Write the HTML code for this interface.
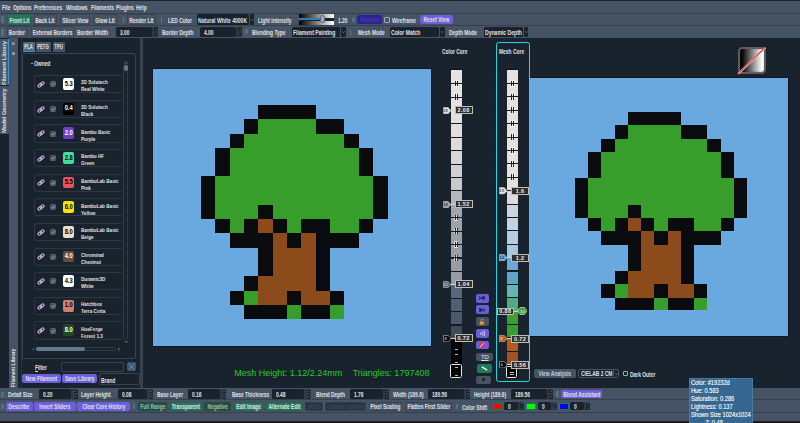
<!DOCTYPE html><html><head><meta charset='utf-8'><style>
*{box-sizing:border-box;margin:0;padding:0}
html,body{width:800px;height:423px;overflow:hidden;background:#19232D}
body{position:relative;font-family:"Liberation Sans",sans-serif;color:#E0E1E3}
.a{position:absolute}
.t{position:absolute;white-space:nowrap;line-height:1;transform-origin:0 0}
svg{display:block}
.bar{position:absolute;left:0;width:800px;background:#455364}
.btn{position:absolute;line-height:1;padding-top:3px;border:1px solid #3a4552;border-radius:1.5px;background:#455364;display:flex;align-items:center;justify-content:center;white-space:nowrap;font-size:6.6px;font-weight:bold;color:#E0E1E3}
.btn span{display:inline-block;transform:scaleX(.745)}
.grn{background:#1f7a5c;border-color:#2b5f50}
.dgrn{background:#1b5141;border-color:#254a3f;color:#a8b8b0}
.pur{background:#6b5fdc;border-color:#6b5fdc;border-radius:2px}
.spin{position:absolute;background:#19232D;border-radius:1.5px}
.grip{position:absolute;width:2.5px;background:#60798B;opacity:.7}
.sep{position:absolute;width:1px;background:#788D9C;opacity:.6}
</style></head><body><div class="a" style="left:0px;top:0px;width:800px;height:423px;background:#19232D;"></div>
<div class="a" style="left:0px;top:1px;width:800px;height:36.8px;background:#36404c;"></div>
<div class="bar" style="top:1px;height:11.8px"></div>
<div class="bar" style="top:13.8px;height:11.2px"></div>
<div class="bar" style="top:26px;height:11.8px"></div>
<div class="t" style="left:1.9px;top:4.90px;font-size:6.6px;font-weight:bold;letter-spacing:0px;transform:scaleX(0.745);">File</div>
<div class="t" style="left:12.75px;top:4.90px;font-size:6.6px;font-weight:bold;letter-spacing:0px;transform:scaleX(0.745);">Options</div>
<div class="t" style="left:34.3px;top:4.90px;font-size:6.6px;font-weight:bold;letter-spacing:0px;transform:scaleX(0.745);">Preferences</div>
<div class="t" style="left:66px;top:4.90px;font-size:6.6px;font-weight:bold;letter-spacing:0px;transform:scaleX(0.745);">Windows</div>
<div class="t" style="left:91px;top:4.90px;font-size:6.6px;font-weight:bold;letter-spacing:0px;transform:scaleX(0.745);">Filaments</div>
<div class="t" style="left:116.3px;top:4.90px;font-size:6.6px;font-weight:bold;letter-spacing:0px;transform:scaleX(0.745);">Plugins</div>
<div class="t" style="left:136.4px;top:4.90px;font-size:6.6px;font-weight:bold;letter-spacing:0px;transform:scaleX(0.745);">Help</div>
<div class="grip" style="left:1.2px;top:15.5px;height:7px"></div>
<div class="btn grn" style="left:6.7px;top:14.4px;width:24.80px;height:10.40px;padding-top:3.00px;"><span>Front Lit</span></div>
<div class="btn " style="left:33.5px;top:14.4px;width:23.40px;height:10.40px;padding-top:3.00px;"><span>Back Lit</span></div>
<div class="btn " style="left:59.75px;top:14.4px;width:30.50px;height:10.40px;padding-top:3.00px;"><span>Slicer View</span></div>
<div class="btn " style="left:92.75px;top:14.4px;width:25.00px;height:10.40px;padding-top:3.00px;"><span>Glow Lit</span></div>
<div class="sep" style="left:122.5px;top:16.5px;height:6px"></div>
<div class="btn " style="left:126.9px;top:14.4px;width:29.35px;height:10.40px;padding-top:3.00px;"><span>Render Lit</span></div>
<div class="sep" style="left:161.3px;top:16.5px;height:6px"></div>
<div class="t" style="left:167.75px;top:17.50px;font-size:6.6px;font-weight:bold;letter-spacing:0px;transform:scaleX(0.745);">LED Color</div>
<div class="a" style="left:196.9px;top:14.4px;width:52.099999999999994px;height:10.4px;background:#19232D;border-radius:1.5px;"></div>
<div class="t" style="left:197.70000000000002px;top:17.90px;font-size:6.6px;font-weight:bold;letter-spacing:0px;transform:scaleX(0.77);">Natural White 4000K</div>
<div class="a" style="left:250px;top:14.4px;width:4.400000000000006px;height:10.4px;background:#19232D;border-radius:1px;"></div>
<svg class="a" style="left:250.70px;top:18.60px" width="3" height="2"><path d="M0.3 0.4L1.5 1.6L2.7 0.4" stroke="#9DA9B5" stroke-width="0.6" fill="none"/></svg>
<div class="t" style="left:257.75px;top:17.50px;font-size:6.6px;font-weight:bold;letter-spacing:0px;transform:scaleX(0.745);">Light Intensity</div>
<div class="a" style="left:298.75px;top:13.75px;width:35.25px;height:11.25px;background:linear-gradient(90deg,#000,#fff)"></div>
<div class="a" style="left:298.75px;top:17.5px;width:35.25px;height:3.3px;background:#19232D;"></div>
<div class="a" style="left:299.3px;top:18.3px;width:22px;height:1.8px;background:#3d7ab5;"></div>
<div class="a" style="left:320px;top:14.9px;width:4.8px;height:8.6px;background:#9aa6b2;border:0.6px solid #5d6b7a;border-radius:2.2px;"></div>
<div class="t" style="left:337.5px;top:17.50px;font-size:6.6px;font-weight:bold;letter-spacing:0px;transform:scaleX(0.745);">1.20</div>
<div class="grip" style="left:352px;top:16.9px;height:5.6px"></div>
<div class="btn " style="left:357.25px;top:15.25px;width:25.00px;height:8.50px;padding-top:1.29px;background:#2c219c;border-color:#2c219c;border-radius:2px;color:#4a3d8c"><span>Remesh</span></div>
<div class="a" style="left:384px;top:17.25px;width:6px;height:5.65px;background:#455364;border:0.8px solid #9DA9B5;border-radius:1px;"></div>
<div class="t" style="left:391.5px;top:17.50px;font-size:6.6px;font-weight:bold;letter-spacing:0px;transform:scaleX(0.745);">Wireframe</div>
<div class="btn pur" style="left:420.2px;top:15.25px;width:32.80px;height:8.55px;padding-top:1.34px;"><span>Reset View</span></div>
<div class="grip" style="left:1.2px;top:28.5px;height:7px"></div>
<div class="btn " style="left:6.5px;top:26.25px;width:21.25px;height:11.25px;padding-top:3.76px;"><span>Border</span></div>
<div class="btn " style="left:30.6px;top:26.25px;width:43.80px;height:11.25px;padding-top:3.76px;"><span>External Borders</span></div>
<div class="t" style="left:76.9px;top:30.10px;font-size:6.6px;font-weight:bold;letter-spacing:0px;transform:scaleX(0.745);">Border Width</div>
<div class="spin" style="left:116px;top:26.9px;width:35.70px;height:10.0px"></div>
<div class="a" style="left:151.7px;top:26.9px;width:6.4px;height:10.0px;background:#2e3945;border-radius:0 1.5px 1.5px 0;"></div>
<div class="t" style="left:120px;top:29.60px;font-size:6.6px;font-weight:bold;letter-spacing:0px;transform:scaleX(0.745);">3.00</div>
<div class="a" style="left:154.1px;top:27.4px;width:3.8px;height:3.7px;background:#19232D;"></div>
<div class="a" style="left:154.1px;top:32.699999999999996px;width:3.8px;height:3.7px;background:#19232D;"></div>
<svg class="a" style="left:154.80px;top:28.50px" width="2.4" height="1.6"><path d="M0.2 1.3L1.2 0.3L2.2 1.3" stroke="#9DA9B5" stroke-width="0.55" fill="none"/></svg>
<svg class="a" style="left:154.80px;top:33.90px" width="2.4" height="1.6"><path d="M0.2 0.3L1.2 1.3L2.2 0.3" stroke="#9DA9B5" stroke-width="0.55" fill="none"/></svg>
<div class="t" style="left:161.9px;top:30.10px;font-size:6.6px;font-weight:bold;letter-spacing:0px;transform:scaleX(0.745);">Border Depth</div>
<div class="spin" style="left:199.75px;top:26.9px;width:35.75px;height:10.0px"></div>
<div class="a" style="left:235.5px;top:26.9px;width:6.4px;height:10.0px;background:#2e3945;border-radius:0 1.5px 1.5px 0;"></div>
<div class="t" style="left:203.75px;top:29.60px;font-size:6.6px;font-weight:bold;letter-spacing:0px;transform:scaleX(0.745);">4.00</div>
<div class="a" style="left:237.9px;top:27.4px;width:3.8px;height:3.7px;background:#19232D;"></div>
<div class="a" style="left:237.9px;top:32.699999999999996px;width:3.8px;height:3.7px;background:#19232D;"></div>
<svg class="a" style="left:238.60px;top:28.50px" width="2.4" height="1.6"><path d="M0.2 1.3L1.2 0.3L2.2 1.3" stroke="#9DA9B5" stroke-width="0.55" fill="none"/></svg>
<svg class="a" style="left:238.60px;top:33.90px" width="2.4" height="1.6"><path d="M0.2 0.3L1.2 1.3L2.2 0.3" stroke="#9DA9B5" stroke-width="0.55" fill="none"/></svg>
<div class="grip" style="left:245px;top:29.4px;height:5px"></div>
<div class="t" style="left:251.9px;top:30.10px;font-size:6.6px;font-weight:bold;letter-spacing:0px;transform:scaleX(0.745);">Blending Type</div>
<div class="a" style="left:292.25px;top:26.8px;width:47.5px;height:10.2px;background:#19232D;border-radius:1.5px;"></div>
<div class="t" style="left:293.05px;top:30.20px;font-size:6.6px;font-weight:bold;letter-spacing:0px;transform:scaleX(0.77);">Filament Painting</div>
<div class="a" style="left:340.75px;top:26.8px;width:4.850000000000023px;height:10.2px;background:#19232D;border-radius:1px;"></div>
<svg class="a" style="left:341.68px;top:30.90px" width="3" height="2"><path d="M0.3 0.4L1.5 1.6L2.7 0.4" stroke="#9DA9B5" stroke-width="0.6" fill="none"/></svg>
<div class="sep" style="left:350.25px;top:29.5px;height:5.5px"></div>
<div class="t" style="left:358px;top:30.10px;font-size:6.6px;font-weight:bold;letter-spacing:0px;transform:scaleX(0.745);">Mesh Mode</div>
<div class="a" style="left:390px;top:26.8px;width:49.19999999999999px;height:10.2px;background:#19232D;border-radius:1.5px;"></div>
<div class="t" style="left:390.8px;top:30.20px;font-size:6.6px;font-weight:bold;letter-spacing:0px;transform:scaleX(0.77);">Color Match</div>
<div class="a" style="left:440.2px;top:26.8px;width:4.600000000000023px;height:10.2px;background:#19232D;border-radius:1px;"></div>
<svg class="a" style="left:441.00px;top:30.90px" width="3" height="2"><path d="M0.3 0.4L1.5 1.6L2.7 0.4" stroke="#9DA9B5" stroke-width="0.6" fill="none"/></svg>
<div class="t" style="left:448.7px;top:30.10px;font-size:6.6px;font-weight:bold;letter-spacing:0px;transform:scaleX(0.745);">Depth Mode</div>
<div class="a" style="left:484.2px;top:26.8px;width:38.55000000000001px;height:10.2px;background:#19232D;border-radius:1.5px;"></div>
<div class="t" style="left:485.0px;top:30.20px;font-size:6.6px;font-weight:bold;letter-spacing:0px;transform:scaleX(0.77);">Dynamic Depth</div>
<div class="a" style="left:523.75px;top:26.8px;width:4.649999999999977px;height:10.2px;background:#19232D;border-radius:1px;"></div>
<svg class="a" style="left:524.58px;top:30.90px" width="3" height="2"><path d="M0.3 0.4L1.5 1.6L2.7 0.4" stroke="#9DA9B5" stroke-width="0.6" fill="none"/></svg>
<div class="a" style="left:0px;top:388px;width:800px;height:33.2px;background:#36404c;"></div>
<div class="bar" style="top:388px;height:11.2px"></div>
<div class="bar" style="top:400.2px;height:12px"></div>
<div class="bar" style="top:413px;height:8.2px"></div>
<div class="a" style="left:0px;top:421.2px;width:800px;height:1.8px;background:#1f1b17;"></div>
<div class="grip" style="left:1.2px;top:392px;height:5px"></div>
<div class="t" style="left:8.1px;top:392.10px;font-size:6.6px;font-weight:bold;letter-spacing:0px;transform:scaleX(0.745);">Detail Size</div>
<div class="spin" style="left:38.75px;top:389.4px;width:32.60px;height:9.600000000000023px"></div>
<div class="a" style="left:71.35px;top:389.4px;width:6.4px;height:9.600000000000023px;background:#2e3945;border-radius:0 1.5px 1.5px 0;"></div>
<div class="t" style="left:42.75px;top:391.90px;font-size:6.6px;font-weight:bold;letter-spacing:0px;transform:scaleX(0.745);">0.20</div>
<div class="a" style="left:73.75px;top:389.9px;width:3.8px;height:3.5000000000000115px;background:#19232D;"></div>
<div class="a" style="left:73.75px;top:395.0px;width:3.8px;height:3.5000000000000115px;background:#19232D;"></div>
<svg class="a" style="left:74.45px;top:390.90px" width="2.4" height="1.6"><path d="M0.2 1.3L1.2 0.3L2.2 1.3" stroke="#9DA9B5" stroke-width="0.55" fill="none"/></svg>
<svg class="a" style="left:74.45px;top:396.10px" width="2.4" height="1.6"><path d="M0.2 0.3L1.2 1.3L2.2 0.3" stroke="#9DA9B5" stroke-width="0.55" fill="none"/></svg>
<div class="t" style="left:81px;top:392.10px;font-size:6.6px;font-weight:bold;letter-spacing:0px;transform:scaleX(0.745);">Layer Height</div>
<div class="spin" style="left:117.5px;top:389.4px;width:29.60px;height:9.600000000000023px"></div>
<div class="a" style="left:147.1px;top:389.4px;width:6.4px;height:9.600000000000023px;background:#2e3945;border-radius:0 1.5px 1.5px 0;"></div>
<div class="t" style="left:121.5px;top:391.90px;font-size:6.6px;font-weight:bold;letter-spacing:0px;transform:scaleX(0.745);">0.08</div>
<div class="a" style="left:149.5px;top:389.9px;width:3.8px;height:3.5000000000000115px;background:#19232D;"></div>
<div class="a" style="left:149.5px;top:395.0px;width:3.8px;height:3.5000000000000115px;background:#19232D;"></div>
<svg class="a" style="left:150.20px;top:390.90px" width="2.4" height="1.6"><path d="M0.2 1.3L1.2 0.3L2.2 1.3" stroke="#9DA9B5" stroke-width="0.55" fill="none"/></svg>
<svg class="a" style="left:150.20px;top:396.10px" width="2.4" height="1.6"><path d="M0.2 0.3L1.2 1.3L2.2 0.3" stroke="#9DA9B5" stroke-width="0.55" fill="none"/></svg>
<div class="t" style="left:156.9px;top:392.10px;font-size:6.6px;font-weight:bold;letter-spacing:0px;transform:scaleX(0.745);">Base Layer</div>
<div class="spin" style="left:187.5px;top:389.4px;width:32.60px;height:9.600000000000023px"></div>
<div class="a" style="left:220.1px;top:389.4px;width:6.4px;height:9.600000000000023px;background:#2e3945;border-radius:0 1.5px 1.5px 0;"></div>
<div class="t" style="left:191.5px;top:391.90px;font-size:6.6px;font-weight:bold;letter-spacing:0px;transform:scaleX(0.745);">0.16</div>
<div class="a" style="left:222.5px;top:389.9px;width:3.8px;height:3.5000000000000115px;background:#19232D;"></div>
<div class="a" style="left:222.5px;top:395.0px;width:3.8px;height:3.5000000000000115px;background:#19232D;"></div>
<svg class="a" style="left:223.20px;top:390.90px" width="2.4" height="1.6"><path d="M0.2 1.3L1.2 0.3L2.2 1.3" stroke="#9DA9B5" stroke-width="0.55" fill="none"/></svg>
<svg class="a" style="left:223.20px;top:396.10px" width="2.4" height="1.6"><path d="M0.2 0.3L1.2 1.3L2.2 0.3" stroke="#9DA9B5" stroke-width="0.55" fill="none"/></svg>
<div class="t" style="left:231.9px;top:392.10px;font-size:6.6px;font-weight:bold;letter-spacing:0px;transform:scaleX(0.745);">Base Thickness</div>
<div class="spin" style="left:272.25px;top:389.4px;width:31.95px;height:9.600000000000023px"></div>
<div class="a" style="left:304.20000000000005px;top:389.4px;width:6.4px;height:9.600000000000023px;background:#2e3945;border-radius:0 1.5px 1.5px 0;"></div>
<div class="t" style="left:276.25px;top:391.90px;font-size:6.6px;font-weight:bold;letter-spacing:0px;transform:scaleX(0.745);">0.48</div>
<div class="a" style="left:306.6px;top:389.9px;width:3.8px;height:3.5000000000000115px;background:#19232D;"></div>
<div class="a" style="left:306.6px;top:395.0px;width:3.8px;height:3.5000000000000115px;background:#19232D;"></div>
<svg class="a" style="left:307.30px;top:390.90px" width="2.4" height="1.6"><path d="M0.2 1.3L1.2 0.3L2.2 1.3" stroke="#9DA9B5" stroke-width="0.55" fill="none"/></svg>
<svg class="a" style="left:307.30px;top:396.10px" width="2.4" height="1.6"><path d="M0.2 0.3L1.2 1.3L2.2 0.3" stroke="#9DA9B5" stroke-width="0.55" fill="none"/></svg>
<div class="t" style="left:316px;top:392.10px;font-size:6.6px;font-weight:bold;letter-spacing:0px;transform:scaleX(0.745);">Blend Depth</div>
<div class="spin" style="left:350.25px;top:389.4px;width:32.35px;height:9.600000000000023px"></div>
<div class="a" style="left:382.6px;top:389.4px;width:6.4px;height:9.600000000000023px;background:#2e3945;border-radius:0 1.5px 1.5px 0;"></div>
<div class="t" style="left:354.25px;top:391.90px;font-size:6.6px;font-weight:bold;letter-spacing:0px;transform:scaleX(0.745);">1.76</div>
<div class="a" style="left:385.0px;top:389.9px;width:3.8px;height:3.5000000000000115px;background:#19232D;"></div>
<div class="a" style="left:385.0px;top:395.0px;width:3.8px;height:3.5000000000000115px;background:#19232D;"></div>
<svg class="a" style="left:385.70px;top:390.90px" width="2.4" height="1.6"><path d="M0.2 1.3L1.2 0.3L2.2 1.3" stroke="#9DA9B5" stroke-width="0.55" fill="none"/></svg>
<svg class="a" style="left:385.70px;top:396.10px" width="2.4" height="1.6"><path d="M0.2 0.3L1.2 1.3L2.2 0.3" stroke="#9DA9B5" stroke-width="0.55" fill="none"/></svg>
<div class="t" style="left:392.5px;top:392.10px;font-size:6.6px;font-weight:bold;letter-spacing:0px;transform:scaleX(0.745);">Width (189.6)</div>
<div class="spin" style="left:428.1px;top:389.4px;width:35.50px;height:9.600000000000023px"></div>
<div class="a" style="left:463.6px;top:389.4px;width:6.4px;height:9.600000000000023px;background:#2e3945;border-radius:0 1.5px 1.5px 0;"></div>
<div class="t" style="left:432.1px;top:391.90px;font-size:6.6px;font-weight:bold;letter-spacing:0px;transform:scaleX(0.745);">189.56</div>
<div class="a" style="left:466.0px;top:389.9px;width:3.8px;height:3.5000000000000115px;background:#19232D;"></div>
<div class="a" style="left:466.0px;top:395.0px;width:3.8px;height:3.5000000000000115px;background:#19232D;"></div>
<svg class="a" style="left:466.70px;top:390.90px" width="2.4" height="1.6"><path d="M0.2 1.3L1.2 0.3L2.2 1.3" stroke="#9DA9B5" stroke-width="0.55" fill="none"/></svg>
<svg class="a" style="left:466.70px;top:396.10px" width="2.4" height="1.6"><path d="M0.2 0.3L1.2 1.3L2.2 0.3" stroke="#9DA9B5" stroke-width="0.55" fill="none"/></svg>
<div class="t" style="left:473.75px;top:392.10px;font-size:6.6px;font-weight:bold;letter-spacing:0px;transform:scaleX(0.745);">Height (189.6)</div>
<div class="spin" style="left:511px;top:389.4px;width:35.70px;height:9.600000000000023px"></div>
<div class="a" style="left:546.7px;top:389.4px;width:6.4px;height:9.600000000000023px;background:#2e3945;border-radius:0 1.5px 1.5px 0;"></div>
<div class="t" style="left:515px;top:391.90px;font-size:6.6px;font-weight:bold;letter-spacing:0px;transform:scaleX(0.745);">189.56</div>
<div class="a" style="left:549.1px;top:389.9px;width:3.8px;height:3.5000000000000115px;background:#19232D;"></div>
<div class="a" style="left:549.1px;top:395.0px;width:3.8px;height:3.5000000000000115px;background:#19232D;"></div>
<svg class="a" style="left:549.80px;top:390.90px" width="2.4" height="1.6"><path d="M0.2 1.3L1.2 0.3L2.2 1.3" stroke="#9DA9B5" stroke-width="0.55" fill="none"/></svg>
<svg class="a" style="left:549.80px;top:396.10px" width="2.4" height="1.6"><path d="M0.2 0.3L1.2 1.3L2.2 0.3" stroke="#9DA9B5" stroke-width="0.55" fill="none"/></svg>
<div class="grip" style="left:556px;top:391px;height:6px"></div>
<div class="btn pur" style="left:560.9px;top:390.3px;width:41.60px;height:8.20px;padding-top:1.02px;"><span>Blend Assistant</span></div>
<div class="grip" style="left:1.2px;top:404px;height:5px"></div>
<div class="btn pur" style="left:6px;top:402.25px;width:26.75px;height:8.75px;padding-top:1.51px;"><span>Describe</span></div>
<div class="btn pur" style="left:34.4px;top:402.25px;width:41.20px;height:8.75px;padding-top:1.51px;"><span>Invert Sliders</span></div>
<div class="btn pur" style="left:77.25px;top:402.25px;width:52.50px;height:8.75px;padding-top:1.51px;"><span>Clear Core History</span></div>
<div class="grip" style="left:132.75px;top:404px;height:5px"></div>
<div class="btn dgrn" style="left:138.1px;top:401.8px;width:28.80px;height:9.40px;padding-top:2.10px;"><span>Full Range</span></div>
<div class="btn grn" style="left:169.75px;top:401.8px;width:32.15px;height:9.40px;padding-top:2.10px;"><span>Transparent</span></div>
<div class="btn dgrn" style="left:204.4px;top:401.8px;width:26.60px;height:9.40px;padding-top:2.10px;"><span>Negative</span></div>
<div class="btn grn" style="left:233.5px;top:401.8px;width:29.60px;height:9.40px;padding-top:2.10px;"><span>Edit Image</span></div>
<div class="btn grn" style="left:265.6px;top:401.8px;width:37.15px;height:9.40px;padding-top:2.10px;"><span>Alternate Edit</span></div>
<div class="btn " style="left:305px;top:401.8px;width:18.10px;height:9.40px;padding-top:2.10px;background:#26333f;color:#3a4754;border-color:#34404c"><span>sRGB</span></div>
<div class="btn " style="left:325.25px;top:401.8px;width:40.75px;height:9.40px;padding-top:2.10px;background:#26333f;color:#3a4754;border-color:#34404c"><span>Unbias Lighting</span></div>
<div class="btn " style="left:368.5px;top:401.8px;width:33.75px;height:9.40px;padding-top:2.10px;"><span>Pixel Scaling</span></div>
<div class="btn " style="left:404.75px;top:401.8px;width:47.50px;height:9.40px;padding-top:2.10px;"><span>Flatten First Slider</span></div>
<div class="grip" style="left:455.6px;top:404px;height:5px"></div>
<div class="t" style="left:461.9px;top:404.50px;font-size:6.6px;font-weight:bold;letter-spacing:0px;transform:scaleX(0.745);">Color Shift</div>
<div class="a" style="left:493.1px;top:402.5px;width:9.649999999999977px;height:7.5px;background:#ff0000;border:1.2px solid #1f7a5c;"></div>
<div class="spin" style="left:504.4px;top:402.3px;width:13.60px;height:8.199999999999989px"></div>
<div class="a" style="left:518.0px;top:402.3px;width:6.4px;height:8.199999999999989px;background:#2e3945;border-radius:0 1.5px 1.5px 0;"></div>
<div class="t" style="left:508.4px;top:404.10px;font-size:6.6px;font-weight:bold;letter-spacing:0px;transform:scaleX(0.745);">0</div>
<div class="a" style="left:520.4px;top:402.8px;width:3.8px;height:2.7999999999999945px;background:#19232D;"></div>
<div class="a" style="left:520.4px;top:407.2px;width:3.8px;height:2.7999999999999945px;background:#19232D;"></div>
<svg class="a" style="left:521.10px;top:403.45px" width="2.4" height="1.6"><path d="M0.2 1.3L1.2 0.3L2.2 1.3" stroke="#9DA9B5" stroke-width="0.55" fill="none"/></svg>
<svg class="a" style="left:521.10px;top:407.95px" width="2.4" height="1.6"><path d="M0.2 0.3L1.2 1.3L2.2 0.3" stroke="#9DA9B5" stroke-width="0.55" fill="none"/></svg>
<div class="a" style="left:526.25px;top:402.5px;width:9.350000000000023px;height:7.5px;background:#00ff00;border:1.2px solid #1f7a5c;"></div>
<div class="spin" style="left:537.5px;top:402.3px;width:13.60px;height:8.199999999999989px"></div>
<div class="a" style="left:551.1px;top:402.3px;width:6.4px;height:8.199999999999989px;background:#2e3945;border-radius:0 1.5px 1.5px 0;"></div>
<div class="t" style="left:541.5px;top:404.10px;font-size:6.6px;font-weight:bold;letter-spacing:0px;transform:scaleX(0.745);">0</div>
<div class="a" style="left:553.5px;top:402.8px;width:3.8px;height:2.7999999999999945px;background:#19232D;"></div>
<div class="a" style="left:553.5px;top:407.2px;width:3.8px;height:2.7999999999999945px;background:#19232D;"></div>
<svg class="a" style="left:554.20px;top:403.45px" width="2.4" height="1.6"><path d="M0.2 1.3L1.2 0.3L2.2 1.3" stroke="#9DA9B5" stroke-width="0.55" fill="none"/></svg>
<svg class="a" style="left:554.20px;top:407.95px" width="2.4" height="1.6"><path d="M0.2 0.3L1.2 1.3L2.2 0.3" stroke="#9DA9B5" stroke-width="0.55" fill="none"/></svg>
<div class="a" style="left:559.4px;top:402.5px;width:9.350000000000023px;height:7.5px;background:#0000ff;border:1.2px solid #1f7a5c;"></div>
<div class="spin" style="left:570.3px;top:402.3px;width:13.60px;height:8.199999999999989px"></div>
<div class="a" style="left:583.9px;top:402.3px;width:6.4px;height:8.199999999999989px;background:#2e3945;border-radius:0 1.5px 1.5px 0;"></div>
<div class="t" style="left:574.3px;top:404.10px;font-size:6.6px;font-weight:bold;letter-spacing:0px;transform:scaleX(0.745);">0</div>
<div class="a" style="left:586.3px;top:402.8px;width:3.8px;height:2.7999999999999945px;background:#19232D;"></div>
<div class="a" style="left:586.3px;top:407.2px;width:3.8px;height:2.7999999999999945px;background:#19232D;"></div>
<svg class="a" style="left:587.00px;top:403.45px" width="2.4" height="1.6"><path d="M0.2 1.3L1.2 0.3L2.2 1.3" stroke="#9DA9B5" stroke-width="0.55" fill="none"/></svg>
<svg class="a" style="left:587.00px;top:407.95px" width="2.4" height="1.6"><path d="M0.2 0.3L1.2 1.3L2.2 0.3" stroke="#9DA9B5" stroke-width="0.55" fill="none"/></svg>
<div class="a" style="left:0px;top:38.8px;width:9px;height:46px;background:#4a596a;"></div>
<div class="a" style="left:8px;top:38.8px;width:1px;height:45.7px;background:#259AE9;"></div>
<div class="t" style="left:1.5px;top:84.50px;font-size:5.8px;font-weight:bold;letter-spacing:-0.08px;transform:rotate(-90deg) ;">Filament Library</div>
<div class="a" style="left:0px;top:86px;width:9px;height:48px;background:#455364;"></div>
<div class="t" style="left:1.5px;top:133.00px;font-size:5.8px;font-weight:bold;letter-spacing:-0.08px;transform:rotate(-90deg) ;">Model Geometry</div>
<div class="a" style="left:9px;top:38px;width:9.3px;height:351px;background:#455364;"></div>
<div class="t" style="left:11.3px;top:39.50px;font-size:7px;font-weight:normal;letter-spacing:0px;color:#C9CDD0;">&#215;</div>
<div class="a" style="left:12px;top:51.8px;width:3px;height:3px;background:#9DA9B5;border-radius:50%;"></div>
<div class="t" style="left:10.9px;top:386.50px;font-size:5.3px;font-weight:bold;letter-spacing:0px;transform:rotate(-90deg) scaleX(0.93);">Filament Library</div>
<div class="a" style="left:21px;top:38px;width:1px;height:351px;background:#2b3540;"></div>
<div class="a" style="left:140px;top:38px;width:2.9px;height:350px;background:#37414F;"></div>
<div class="btn " style="left:23px;top:42.25px;width:12.00px;height:9.75px;padding-top:2.41px;background:#54687A;border:none;border-radius:1px 1px 0 0;padding-top:0.5px"><span><span style="transform:scaleX(.86)">PLA</span></span></div>
<div class="a" style="left:23px;top:51px;width:12px;height:1.2px;background:#259AE9;"></div>
<div class="btn " style="left:36.2px;top:42.25px;width:14.50px;height:9.75px;padding-top:2.41px;border:none;border-radius:1px 1px 0 0;padding-top:0.5px"><span><span style="transform:scaleX(.86)">PETG</span></span></div>
<div class="btn " style="left:52.7px;top:42.25px;width:12.30px;height:9.75px;padding-top:2.41px;border:none;border-radius:1px 1px 0 0;padding-top:0.5px"><span><span style="transform:scaleX(.86)">TPU</span></span></div>
<div class="a" style="left:22.25px;top:52.75px;width:113.5px;height:306.2px;background:transparent;border:1px solid #37414F;border-radius:2px;"></div>
<div class="a" style="left:31.4px;top:63.4px;width:1.4px;height:0.8px;background:#9DA9B5;"></div>
<div class="t" style="left:34.25px;top:61.40px;font-size:6.6px;font-weight:bold;letter-spacing:0px;transform:scaleX(0.745);">Owned</div>
<div class="a" style="left:34.25px;top:75.2px;width:95px;height:18.2px;background:transparent;border:1px solid #2d3844;border-radius:2.5px;"></div>
<div class="a" style="left:37.4px;top:81.0px;width:8px;height:7px"><svg width="8" height="7" viewBox="0 0 8 7"><g fill="none" stroke="#c9b3dc" stroke-width="1.1"><rect x="0.8" y="3.2" width="4.2" height="2.4" rx="1.2" transform="rotate(-38 2.9 4.4)"/><rect x="3" y="1.4" width="4.2" height="2.4" rx="1.2" transform="rotate(-38 5.1 2.6)"/></g></svg></div>
<div class="a" style="left:49.8px;top:81.3px;width:6.2px;height:6px;background:#424c58;border:0.8px solid #5d6773;border-radius:1.5px;"></div>
<svg class="a" style="left:50.8px;top:82.30px" width="4.2" height="4"><path d="M0.5 2.2L1.7 3.3L3.8 0.5" stroke="#d8d8d8" stroke-width="0.7" fill="none"/></svg>
<div class="a" style="left:62.9px;top:78.2px;width:11.3px;height:11.8px;background:#ffffff;border-radius:2px;"></div>
<div class="t" style="left:62.9px;top:80.8px;width:11.3px;text-align:center;font-size:6.8px;font-weight:bold;letter-spacing:0px;transform:scaleX(.85);transform-origin:50% 0;color:#000">5.3</div>
<div class="t" style="left:80.6px;top:79.40px;font-size:6.1px;font-weight:bold;letter-spacing:0px;transform:scaleX(0.76);">3D Solutech</div>
<div class="t" style="left:80.6px;top:86.40px;font-size:6.1px;font-weight:bold;letter-spacing:0px;transform:scaleX(0.76);">Real White</div>
<div class="a" style="left:34.25px;top:99.82000000000001px;width:95px;height:18.2px;background:transparent;border:1px solid #2d3844;border-radius:2.5px;"></div>
<div class="a" style="left:37.4px;top:105.62px;width:8px;height:7px"><svg width="8" height="7" viewBox="0 0 8 7"><g fill="none" stroke="#c9b3dc" stroke-width="1.1"><rect x="0.8" y="3.2" width="4.2" height="2.4" rx="1.2" transform="rotate(-38 2.9 4.4)"/><rect x="3" y="1.4" width="4.2" height="2.4" rx="1.2" transform="rotate(-38 5.1 2.6)"/></g></svg></div>
<div class="a" style="left:49.8px;top:105.92px;width:6.2px;height:6px;background:#424c58;border:0.8px solid #5d6773;border-radius:1.5px;"></div>
<svg class="a" style="left:50.8px;top:106.92px" width="4.2" height="4"><path d="M0.5 2.2L1.7 3.3L3.8 0.5" stroke="#d8d8d8" stroke-width="0.7" fill="none"/></svg>
<div class="a" style="left:62.9px;top:102.82000000000001px;width:11.3px;height:11.8px;background:#000000;border-radius:2px;"></div>
<div class="t" style="left:62.9px;top:105.42px;width:11.3px;text-align:center;font-size:6.8px;font-weight:bold;letter-spacing:0px;transform:scaleX(.85);transform-origin:50% 0;color:#fff">0.4</div>
<div class="t" style="left:80.6px;top:104.02px;font-size:6.1px;font-weight:bold;letter-spacing:0px;transform:scaleX(0.76);">3D Solutech</div>
<div class="t" style="left:80.6px;top:111.02px;font-size:6.1px;font-weight:bold;letter-spacing:0px;transform:scaleX(0.76);">Black</div>
<div class="a" style="left:34.25px;top:124.44px;width:95px;height:18.2px;background:transparent;border:1px solid #2d3844;border-radius:2.5px;"></div>
<div class="a" style="left:37.4px;top:130.24px;width:8px;height:7px"><svg width="8" height="7" viewBox="0 0 8 7"><g fill="none" stroke="#c9b3dc" stroke-width="1.1"><rect x="0.8" y="3.2" width="4.2" height="2.4" rx="1.2" transform="rotate(-38 2.9 4.4)"/><rect x="3" y="1.4" width="4.2" height="2.4" rx="1.2" transform="rotate(-38 5.1 2.6)"/></g></svg></div>
<div class="a" style="left:49.8px;top:130.54px;width:6.2px;height:6px;background:#424c58;border:0.8px solid #5d6773;border-radius:1.5px;"></div>
<svg class="a" style="left:50.8px;top:131.54px" width="4.2" height="4"><path d="M0.5 2.2L1.7 3.3L3.8 0.5" stroke="#d8d8d8" stroke-width="0.7" fill="none"/></svg>
<div class="a" style="left:62.9px;top:127.44px;width:11.3px;height:11.8px;background:#6b3fc8;border-radius:2px;"></div>
<div class="t" style="left:62.9px;top:130.04px;width:11.3px;text-align:center;font-size:6.8px;font-weight:bold;letter-spacing:0px;transform:scaleX(.85);transform-origin:50% 0;color:#fff">2.0</div>
<div class="t" style="left:80.6px;top:128.64px;font-size:6.1px;font-weight:bold;letter-spacing:0px;transform:scaleX(0.76);">Bambu Basic</div>
<div class="t" style="left:80.6px;top:135.64px;font-size:6.1px;font-weight:bold;letter-spacing:0px;transform:scaleX(0.76);">Purple</div>
<div class="a" style="left:34.25px;top:149.06px;width:95px;height:18.2px;background:transparent;border:1px solid #2d3844;border-radius:2.5px;"></div>
<div class="a" style="left:37.4px;top:154.86px;width:8px;height:7px"><svg width="8" height="7" viewBox="0 0 8 7"><g fill="none" stroke="#c9b3dc" stroke-width="1.1"><rect x="0.8" y="3.2" width="4.2" height="2.4" rx="1.2" transform="rotate(-38 2.9 4.4)"/><rect x="3" y="1.4" width="4.2" height="2.4" rx="1.2" transform="rotate(-38 5.1 2.6)"/></g></svg></div>
<div class="a" style="left:49.8px;top:155.16px;width:6.2px;height:6px;background:#424c58;border:0.8px solid #5d6773;border-radius:1.5px;"></div>
<svg class="a" style="left:50.8px;top:156.16px" width="4.2" height="4"><path d="M0.5 2.2L1.7 3.3L3.8 0.5" stroke="#d8d8d8" stroke-width="0.7" fill="none"/></svg>
<div class="a" style="left:62.9px;top:152.06px;width:11.3px;height:11.8px;background:#3ee0a0;border-radius:2px;"></div>
<div class="t" style="left:62.9px;top:154.66px;width:11.3px;text-align:center;font-size:6.8px;font-weight:bold;letter-spacing:0px;transform:scaleX(.85);transform-origin:50% 0;color:#000">2.8</div>
<div class="t" style="left:80.6px;top:153.26px;font-size:6.1px;font-weight:bold;letter-spacing:0px;transform:scaleX(0.76);">Bambu HF</div>
<div class="t" style="left:80.6px;top:160.26px;font-size:6.1px;font-weight:bold;letter-spacing:0px;transform:scaleX(0.76);">Green</div>
<div class="a" style="left:34.25px;top:173.68px;width:95px;height:18.2px;background:transparent;border:1px solid #2d3844;border-radius:2.5px;"></div>
<div class="a" style="left:37.4px;top:179.48000000000002px;width:8px;height:7px"><svg width="8" height="7" viewBox="0 0 8 7"><g fill="none" stroke="#c9b3dc" stroke-width="1.1"><rect x="0.8" y="3.2" width="4.2" height="2.4" rx="1.2" transform="rotate(-38 2.9 4.4)"/><rect x="3" y="1.4" width="4.2" height="2.4" rx="1.2" transform="rotate(-38 5.1 2.6)"/></g></svg></div>
<div class="a" style="left:49.8px;top:179.78px;width:6.2px;height:6px;background:#424c58;border:0.8px solid #5d6773;border-radius:1.5px;"></div>
<svg class="a" style="left:50.8px;top:180.78px" width="4.2" height="4"><path d="M0.5 2.2L1.7 3.3L3.8 0.5" stroke="#d8d8d8" stroke-width="0.7" fill="none"/></svg>
<div class="a" style="left:62.9px;top:176.68px;width:11.3px;height:11.8px;background:#f0505a;border-radius:2px;"></div>
<div class="t" style="left:62.9px;top:179.28px;width:11.3px;text-align:center;font-size:6.8px;font-weight:bold;letter-spacing:0px;transform:scaleX(.85);transform-origin:50% 0;color:#000">5.5</div>
<div class="t" style="left:80.6px;top:177.88px;font-size:6.1px;font-weight:bold;letter-spacing:0px;transform:scaleX(0.76);">BambuLab Basic</div>
<div class="t" style="left:80.6px;top:184.88px;font-size:6.1px;font-weight:bold;letter-spacing:0px;transform:scaleX(0.76);">Pink</div>
<div class="a" style="left:34.25px;top:198.3px;width:95px;height:18.2px;background:transparent;border:1px solid #2d3844;border-radius:2.5px;"></div>
<div class="a" style="left:37.4px;top:204.10000000000002px;width:8px;height:7px"><svg width="8" height="7" viewBox="0 0 8 7"><g fill="none" stroke="#c9b3dc" stroke-width="1.1"><rect x="0.8" y="3.2" width="4.2" height="2.4" rx="1.2" transform="rotate(-38 2.9 4.4)"/><rect x="3" y="1.4" width="4.2" height="2.4" rx="1.2" transform="rotate(-38 5.1 2.6)"/></g></svg></div>
<div class="a" style="left:49.8px;top:204.4px;width:6.2px;height:6px;background:#424c58;border:0.8px solid #5d6773;border-radius:1.5px;"></div>
<svg class="a" style="left:50.8px;top:205.40px" width="4.2" height="4"><path d="M0.5 2.2L1.7 3.3L3.8 0.5" stroke="#d8d8d8" stroke-width="0.7" fill="none"/></svg>
<div class="a" style="left:62.9px;top:201.3px;width:11.3px;height:11.8px;background:#f5e400;border-radius:2px;"></div>
<div class="t" style="left:62.9px;top:203.9px;width:11.3px;text-align:center;font-size:6.8px;font-weight:bold;letter-spacing:0px;transform:scaleX(.85);transform-origin:50% 0;color:#000">6.0</div>
<div class="t" style="left:80.6px;top:202.50px;font-size:6.1px;font-weight:bold;letter-spacing:0px;transform:scaleX(0.76);">BambuLab Basic</div>
<div class="t" style="left:80.6px;top:209.50px;font-size:6.1px;font-weight:bold;letter-spacing:0px;transform:scaleX(0.76);">Yellow</div>
<div class="a" style="left:34.25px;top:222.92000000000002px;width:95px;height:18.2px;background:transparent;border:1px solid #2d3844;border-radius:2.5px;"></div>
<div class="a" style="left:37.4px;top:228.72000000000003px;width:8px;height:7px"><svg width="8" height="7" viewBox="0 0 8 7"><g fill="none" stroke="#c9b3dc" stroke-width="1.1"><rect x="0.8" y="3.2" width="4.2" height="2.4" rx="1.2" transform="rotate(-38 2.9 4.4)"/><rect x="3" y="1.4" width="4.2" height="2.4" rx="1.2" transform="rotate(-38 5.1 2.6)"/></g></svg></div>
<div class="a" style="left:49.8px;top:229.02px;width:6.2px;height:6px;background:#424c58;border:0.8px solid #5d6773;border-radius:1.5px;"></div>
<svg class="a" style="left:50.8px;top:230.02px" width="4.2" height="4"><path d="M0.5 2.2L1.7 3.3L3.8 0.5" stroke="#d8d8d8" stroke-width="0.7" fill="none"/></svg>
<div class="a" style="left:62.9px;top:225.92000000000002px;width:11.3px;height:11.8px;background:#f2dcc4;border-radius:2px;"></div>
<div class="t" style="left:62.9px;top:228.52px;width:11.3px;text-align:center;font-size:6.8px;font-weight:bold;letter-spacing:0px;transform:scaleX(.85);transform-origin:50% 0;color:#000">8.0</div>
<div class="t" style="left:80.6px;top:227.12px;font-size:6.1px;font-weight:bold;letter-spacing:0px;transform:scaleX(0.76);">BambuLab Basic</div>
<div class="t" style="left:80.6px;top:234.12px;font-size:6.1px;font-weight:bold;letter-spacing:0px;transform:scaleX(0.76);">Beige</div>
<div class="a" style="left:34.25px;top:247.54000000000002px;width:95px;height:18.2px;background:transparent;border:1px solid #2d3844;border-radius:2.5px;"></div>
<div class="a" style="left:37.4px;top:253.34000000000003px;width:8px;height:7px"><svg width="8" height="7" viewBox="0 0 8 7"><g fill="none" stroke="#c9b3dc" stroke-width="1.1"><rect x="0.8" y="3.2" width="4.2" height="2.4" rx="1.2" transform="rotate(-38 2.9 4.4)"/><rect x="3" y="1.4" width="4.2" height="2.4" rx="1.2" transform="rotate(-38 5.1 2.6)"/></g></svg></div>
<div class="a" style="left:49.8px;top:253.64000000000001px;width:6.2px;height:6px;background:#424c58;border:0.8px solid #5d6773;border-radius:1.5px;"></div>
<svg class="a" style="left:50.8px;top:254.64px" width="4.2" height="4"><path d="M0.5 2.2L1.7 3.3L3.8 0.5" stroke="#d8d8d8" stroke-width="0.7" fill="none"/></svg>
<div class="a" style="left:62.9px;top:250.54000000000002px;width:11.3px;height:11.8px;background:#6e4a3a;border-radius:2px;"></div>
<div class="t" style="left:62.9px;top:253.14000000000001px;width:11.3px;text-align:center;font-size:6.8px;font-weight:bold;letter-spacing:0px;transform:scaleX(.85);transform-origin:50% 0;color:#fff">4.0</div>
<div class="t" style="left:80.6px;top:251.74px;font-size:6.1px;font-weight:bold;letter-spacing:0px;transform:scaleX(0.76);">Chrominal</div>
<div class="t" style="left:80.6px;top:258.74px;font-size:6.1px;font-weight:bold;letter-spacing:0px;transform:scaleX(0.76);">Chestnut</div>
<div class="a" style="left:34.25px;top:272.16px;width:95px;height:18.2px;background:transparent;border:1px solid #2d3844;border-radius:2.5px;"></div>
<div class="a" style="left:37.4px;top:277.96000000000004px;width:8px;height:7px"><svg width="8" height="7" viewBox="0 0 8 7"><g fill="none" stroke="#c9b3dc" stroke-width="1.1"><rect x="0.8" y="3.2" width="4.2" height="2.4" rx="1.2" transform="rotate(-38 2.9 4.4)"/><rect x="3" y="1.4" width="4.2" height="2.4" rx="1.2" transform="rotate(-38 5.1 2.6)"/></g></svg></div>
<div class="a" style="left:49.8px;top:278.26000000000005px;width:6.2px;height:6px;background:#424c58;border:0.8px solid #5d6773;border-radius:1.5px;"></div>
<svg class="a" style="left:50.8px;top:279.26px" width="4.2" height="4"><path d="M0.5 2.2L1.7 3.3L3.8 0.5" stroke="#d8d8d8" stroke-width="0.7" fill="none"/></svg>
<div class="a" style="left:62.9px;top:275.16px;width:11.3px;height:11.8px;background:#ffffff;border-radius:2px;"></div>
<div class="t" style="left:62.9px;top:277.76000000000005px;width:11.3px;text-align:center;font-size:6.8px;font-weight:bold;letter-spacing:0px;transform:scaleX(.85);transform-origin:50% 0;color:#000">4.3</div>
<div class="t" style="left:80.6px;top:276.36px;font-size:6.1px;font-weight:bold;letter-spacing:0px;transform:scaleX(0.76);">Duramic3D</div>
<div class="t" style="left:80.6px;top:283.36px;font-size:6.1px;font-weight:bold;letter-spacing:0px;transform:scaleX(0.76);">White</div>
<div class="a" style="left:34.25px;top:296.78000000000003px;width:95px;height:18.2px;background:transparent;border:1px solid #2d3844;border-radius:2.5px;"></div>
<div class="a" style="left:37.4px;top:302.58000000000004px;width:8px;height:7px"><svg width="8" height="7" viewBox="0 0 8 7"><g fill="none" stroke="#c9b3dc" stroke-width="1.1"><rect x="0.8" y="3.2" width="4.2" height="2.4" rx="1.2" transform="rotate(-38 2.9 4.4)"/><rect x="3" y="1.4" width="4.2" height="2.4" rx="1.2" transform="rotate(-38 5.1 2.6)"/></g></svg></div>
<div class="a" style="left:49.8px;top:302.88000000000005px;width:6.2px;height:6px;background:#424c58;border:0.8px solid #5d6773;border-radius:1.5px;"></div>
<svg class="a" style="left:50.8px;top:303.88px" width="4.2" height="4"><path d="M0.5 2.2L1.7 3.3L3.8 0.5" stroke="#d8d8d8" stroke-width="0.7" fill="none"/></svg>
<div class="a" style="left:62.9px;top:299.78000000000003px;width:11.3px;height:11.8px;background:#d08070;border-radius:2px;"></div>
<div class="t" style="left:62.9px;top:302.38000000000005px;width:11.3px;text-align:center;font-size:6.8px;font-weight:bold;letter-spacing:0px;transform:scaleX(.85);transform-origin:50% 0;color:#000">1.0</div>
<div class="t" style="left:80.6px;top:300.98px;font-size:6.1px;font-weight:bold;letter-spacing:0px;transform:scaleX(0.76);">Hatchbox</div>
<div class="t" style="left:80.6px;top:307.98px;font-size:6.1px;font-weight:bold;letter-spacing:0px;transform:scaleX(0.76);">Terra Cotta</div>
<div class="a" style="left:34.25px;top:321.40000000000003px;width:95px;height:18.2px;background:transparent;border:1px solid #2d3844;border-radius:2.5px;"></div>
<div class="a" style="left:37.4px;top:327.20000000000005px;width:8px;height:7px"><svg width="8" height="7" viewBox="0 0 8 7"><g fill="none" stroke="#c9b3dc" stroke-width="1.1"><rect x="0.8" y="3.2" width="4.2" height="2.4" rx="1.2" transform="rotate(-38 2.9 4.4)"/><rect x="3" y="1.4" width="4.2" height="2.4" rx="1.2" transform="rotate(-38 5.1 2.6)"/></g></svg></div>
<div class="a" style="left:49.8px;top:327.50000000000006px;width:6.2px;height:6px;background:#424c58;border:0.8px solid #5d6773;border-radius:1.5px;"></div>
<svg class="a" style="left:50.8px;top:328.50px" width="4.2" height="4"><path d="M0.5 2.2L1.7 3.3L3.8 0.5" stroke="#d8d8d8" stroke-width="0.7" fill="none"/></svg>
<div class="a" style="left:62.9px;top:324.40000000000003px;width:11.3px;height:11.8px;background:#1e4a1e;border-radius:2px;"></div>
<div class="t" style="left:62.9px;top:327.00000000000006px;width:11.3px;text-align:center;font-size:6.8px;font-weight:bold;letter-spacing:0px;transform:scaleX(.85);transform-origin:50% 0;color:#fff">8.0</div>
<div class="t" style="left:80.6px;top:325.60px;font-size:6.1px;font-weight:bold;letter-spacing:0px;transform:scaleX(0.76);">HueForge</div>
<div class="t" style="left:80.6px;top:332.60px;font-size:6.1px;font-weight:bold;letter-spacing:0px;transform:scaleX(0.76);">Forest 1.3</div>
<div class="a" style="left:122.2px;top:53.7px;width:13px;height:303px;background:#19232D;"></div>
<div class="a" style="left:123.2px;top:64px;width:5px;height:276px;background:transparent;border:1px solid #2f3a46;border-radius:2.5px;"></div>
<div class="a" style="left:123.5px;top:65px;width:4.7px;height:5.8px;background:#60798B;border-radius:2.3px;"></div>
<svg class="a" style="left:123.6px;top:61.4px" width="4.4" height="2.4"><path d="M0 2.4L2.2 0L4.4 2.4z" fill="#455364"/></svg>
<svg class="a" style="left:123.6px;top:340.6px" width="4.4" height="2.4"><path d="M0 0L2.2 2.4L4.4 0z" fill="#455364"/></svg>
<div class="a" style="left:35.2px;top:347px;width:80.4px;height:4.4px;background:transparent;border:1px solid #2f3a46;border-radius:2.2px;"></div>
<div class="a" style="left:35.6px;top:347.3px;width:49.2px;height:3.8px;background:#60798B;border-radius:2px;"></div>
<svg class="a" style="left:31.8px;top:347px" width="2.4" height="4.4"><path d="M2.4 0L0 2.2L2.4 4.4z" fill="#455364"/></svg>
<svg class="a" style="left:118.4px;top:347px" width="2.4" height="4.4"><path d="M0 0L2.4 2.2L0 4.4z" fill="#455364"/></svg>
<div class="t" style="left:34.8px;top:364.70px;font-size:6.6px;font-weight:bold;letter-spacing:0px;transform:scaleX(0.745);"><u>F</u>ilter</div>
<div class="a" style="left:61.3px;top:361.5px;width:63.2px;height:10.1px;background:#19232D;border:1px solid #37414F;border-radius:2px;"></div>
<div class="a" style="left:126.6px;top:361.8px;width:9.3px;height:9.5px;background:#455364;border-radius:2px;"></div>
<div class="a" style="left:127.6px;top:362.6px;width:7.2px;height:7.8px"><svg width="7.2" height="7.8" viewBox="0 0 7.2 7.8"><path d="M0.6 0.6L6.6 7.2M6.6 0.6L0.6 7.2" stroke="#3b9fe8" stroke-width="1"/></svg></div>
<div class="btn pur" style="left:22.3px;top:374.4px;width:38.40px;height:8.90px;padding-top:1.65px;"><span>New Filament</span></div>
<div class="btn pur" style="left:62px;top:374.4px;width:34.70px;height:8.90px;padding-top:1.65px;"><span>Save Library</span></div>
<div class="a" style="left:98.6px;top:373.4px;width:41px;height:11.4px;background:#19232D;border:1px solid #37414F;border-radius:2px;"></div>
<div class="t" style="left:101px;top:377.70px;font-size:6.6px;font-weight:bold;letter-spacing:0px;transform:scaleX(0.745);">Brand</div>
<div class="a" style="left:153.3px;top:69px;width:277.7px;height:277px;background:#6aa8e0;box-shadow:0 0 0 0.8px #10161c;"></div>
<svg class="a" style="left:201.3px;top:105.4px" width="186.55" height="214.05" viewBox="0 0 13 15" preserveAspectRatio="none" shape-rendering="crispEdges"><rect x="4" y="0" width="4" height="1" fill="#0a0b0f"/><rect x="3" y="1" width="1" height="1" fill="#0a0b0f"/><rect x="4" y="1" width="4" height="1" fill="#379e2b"/><rect x="8" y="1" width="2" height="1" fill="#0a0b0f"/><rect x="2" y="2" width="1" height="1" fill="#0a0b0f"/><rect x="3" y="2" width="7" height="1" fill="#379e2b"/><rect x="10" y="2" width="1" height="1" fill="#0a0b0f"/><rect x="1" y="3" width="1" height="1" fill="#0a0b0f"/><rect x="2" y="3" width="9" height="1" fill="#379e2b"/><rect x="11" y="3" width="1" height="1" fill="#0a0b0f"/><rect x="1" y="4" width="1" height="1" fill="#0a0b0f"/><rect x="2" y="4" width="9" height="1" fill="#379e2b"/><rect x="11" y="4" width="1" height="1" fill="#0a0b0f"/><rect x="0" y="5" width="1" height="1" fill="#0a0b0f"/><rect x="1" y="5" width="11" height="1" fill="#379e2b"/><rect x="12" y="5" width="1" height="1" fill="#0a0b0f"/><rect x="0" y="6" width="1" height="1" fill="#0a0b0f"/><rect x="1" y="6" width="11" height="1" fill="#379e2b"/><rect x="12" y="6" width="1" height="1" fill="#0a0b0f"/><rect x="0" y="7" width="1" height="1" fill="#0a0b0f"/><rect x="1" y="7" width="3" height="1" fill="#379e2b"/><rect x="4" y="7" width="1" height="1" fill="#0a0b0f"/><rect x="5" y="7" width="7" height="1" fill="#379e2b"/><rect x="12" y="7" width="1" height="1" fill="#0a0b0f"/><rect x="1" y="8" width="1" height="1" fill="#0a0b0f"/><rect x="2" y="8" width="1" height="1" fill="#379e2b"/><rect x="3" y="8" width="1" height="1" fill="#0a0b0f"/><rect x="4" y="8" width="1" height="1" fill="#8b4b1a"/><rect x="5" y="8" width="1" height="1" fill="#0a0b0f"/><rect x="6" y="8" width="1" height="1" fill="#379e2b"/><rect x="7" y="8" width="2" height="1" fill="#0a0b0f"/><rect x="9" y="8" width="2" height="1" fill="#379e2b"/><rect x="11" y="8" width="1" height="1" fill="#0a0b0f"/><rect x="2" y="9" width="3" height="1" fill="#0a0b0f"/><rect x="5" y="9" width="1" height="1" fill="#8b4b1a"/><rect x="6" y="9" width="1" height="1" fill="#0a0b0f"/><rect x="7" y="9" width="1" height="1" fill="#8b4b1a"/><rect x="8" y="9" width="3" height="1" fill="#0a0b0f"/><rect x="4" y="10" width="1" height="1" fill="#0a0b0f"/><rect x="5" y="10" width="3" height="1" fill="#8b4b1a"/><rect x="8" y="10" width="1" height="1" fill="#0a0b0f"/><rect x="4" y="11" width="1" height="1" fill="#0a0b0f"/><rect x="5" y="11" width="3" height="1" fill="#8b4b1a"/><rect x="8" y="11" width="1" height="1" fill="#0a0b0f"/><rect x="3" y="12" width="1" height="1" fill="#0a0b0f"/><rect x="4" y="12" width="4" height="1" fill="#8b4b1a"/><rect x="8" y="12" width="1" height="1" fill="#0a0b0f"/><rect x="2" y="13" width="1" height="1" fill="#0a0b0f"/><rect x="3" y="13" width="1" height="1" fill="#379e2b"/><rect x="4" y="13" width="2" height="1" fill="#8b4b1a"/><rect x="6" y="13" width="1" height="1" fill="#0a0b0f"/><rect x="7" y="13" width="2" height="1" fill="#8b4b1a"/><rect x="9" y="13" width="1" height="1" fill="#0a0b0f"/><rect x="3" y="14" width="3" height="1" fill="#0a0b0f"/><rect x="6" y="14" width="1" height="1" fill="#379e2b"/><rect x="7" y="14" width="2" height="1" fill="#0a0b0f"/><rect x="9" y="14" width="1" height="1" fill="#379e2b"/></svg>
<div class="a" style="left:530.4px;top:77.6px;width:257.5px;height:258px;background:#6aa8e0;box-shadow:0 0 0 0.8px #10161c;"></div>
<svg class="a" style="left:575.4px;top:111.55px" width="172.12" height="198.75" viewBox="0 0 13 15" preserveAspectRatio="none" shape-rendering="crispEdges"><rect x="4" y="0" width="4" height="1" fill="#0a0b0f"/><rect x="3" y="1" width="1" height="1" fill="#0a0b0f"/><rect x="4" y="1" width="4" height="1" fill="#379e2b"/><rect x="8" y="1" width="2" height="1" fill="#0a0b0f"/><rect x="2" y="2" width="1" height="1" fill="#0a0b0f"/><rect x="3" y="2" width="7" height="1" fill="#379e2b"/><rect x="10" y="2" width="1" height="1" fill="#0a0b0f"/><rect x="1" y="3" width="1" height="1" fill="#0a0b0f"/><rect x="2" y="3" width="9" height="1" fill="#379e2b"/><rect x="11" y="3" width="1" height="1" fill="#0a0b0f"/><rect x="1" y="4" width="1" height="1" fill="#0a0b0f"/><rect x="2" y="4" width="9" height="1" fill="#379e2b"/><rect x="11" y="4" width="1" height="1" fill="#0a0b0f"/><rect x="0" y="5" width="1" height="1" fill="#0a0b0f"/><rect x="1" y="5" width="11" height="1" fill="#379e2b"/><rect x="12" y="5" width="1" height="1" fill="#0a0b0f"/><rect x="0" y="6" width="1" height="1" fill="#0a0b0f"/><rect x="1" y="6" width="11" height="1" fill="#379e2b"/><rect x="12" y="6" width="1" height="1" fill="#0a0b0f"/><rect x="0" y="7" width="1" height="1" fill="#0a0b0f"/><rect x="1" y="7" width="3" height="1" fill="#379e2b"/><rect x="4" y="7" width="1" height="1" fill="#0a0b0f"/><rect x="5" y="7" width="7" height="1" fill="#379e2b"/><rect x="12" y="7" width="1" height="1" fill="#0a0b0f"/><rect x="1" y="8" width="1" height="1" fill="#0a0b0f"/><rect x="2" y="8" width="1" height="1" fill="#379e2b"/><rect x="3" y="8" width="1" height="1" fill="#0a0b0f"/><rect x="4" y="8" width="1" height="1" fill="#8b4b1a"/><rect x="5" y="8" width="1" height="1" fill="#0a0b0f"/><rect x="6" y="8" width="1" height="1" fill="#379e2b"/><rect x="7" y="8" width="2" height="1" fill="#0a0b0f"/><rect x="9" y="8" width="2" height="1" fill="#379e2b"/><rect x="11" y="8" width="1" height="1" fill="#0a0b0f"/><rect x="2" y="9" width="3" height="1" fill="#0a0b0f"/><rect x="5" y="9" width="1" height="1" fill="#8b4b1a"/><rect x="6" y="9" width="1" height="1" fill="#0a0b0f"/><rect x="7" y="9" width="1" height="1" fill="#8b4b1a"/><rect x="8" y="9" width="3" height="1" fill="#0a0b0f"/><rect x="4" y="10" width="1" height="1" fill="#0a0b0f"/><rect x="5" y="10" width="3" height="1" fill="#8b4b1a"/><rect x="8" y="10" width="1" height="1" fill="#0a0b0f"/><rect x="4" y="11" width="1" height="1" fill="#0a0b0f"/><rect x="5" y="11" width="3" height="1" fill="#8b4b1a"/><rect x="8" y="11" width="1" height="1" fill="#0a0b0f"/><rect x="3" y="12" width="1" height="1" fill="#0a0b0f"/><rect x="4" y="12" width="4" height="1" fill="#8b4b1a"/><rect x="8" y="12" width="1" height="1" fill="#0a0b0f"/><rect x="2" y="13" width="1" height="1" fill="#0a0b0f"/><rect x="3" y="13" width="1" height="1" fill="#379e2b"/><rect x="4" y="13" width="2" height="1" fill="#8b4b1a"/><rect x="6" y="13" width="1" height="1" fill="#0a0b0f"/><rect x="7" y="13" width="2" height="1" fill="#8b4b1a"/><rect x="9" y="13" width="1" height="1" fill="#0a0b0f"/><rect x="3" y="14" width="3" height="1" fill="#0a0b0f"/><rect x="6" y="14" width="1" height="1" fill="#379e2b"/><rect x="7" y="14" width="2" height="1" fill="#0a0b0f"/><rect x="9" y="14" width="1" height="1" fill="#379e2b"/></svg>
<div class="t" style="left:234.3px;top:369.20px;font-size:9px;font-weight:normal;letter-spacing:0px;color:#22cc22;">Mesh Height: 1.12/2.24mm</div>
<div class="t" style="left:352.7px;top:369.20px;font-size:9px;font-weight:normal;letter-spacing:0px;color:#22cc22;">Triangles: 1797408</div>
<div class="a" style="left:738.3px;top:46.8px;width:27.7px;height:27.7px;border-radius:4.5px;border:2px solid #5e5e5e;background:linear-gradient(90deg,#000 8%,#fff 92%);box-shadow:inset 0 0 1px #222"></div>
<svg class="a" style="left:737px;top:46px" width="30" height="30"><path d="M1.8 27.3L27.8 2.2" stroke="#dfe8e8" stroke-width="2" stroke-linecap="round"/><path d="M1.6 27.1L27.6 2" stroke="#ff3030" stroke-width="1.2" stroke-linecap="round"/></svg>
<div class="btn " style="left:534.1px;top:369px;width:41.50px;height:9.40px;padding-top:2.10px;border:none;border-radius:2px;color:#C9CDD0"><span>View Analysis</span></div>
<div class="a" style="left:578.4px;top:369.4px;width:40.7px;height:9px;background:#19232D;border:1px solid #455364;border-radius:2px;"></div>
<div class="t" style="left:580.5px;top:371.30px;font-size:6.6px;font-weight:bold;letter-spacing:0px;transform:scaleX(0.745);">CIELAB 2 CM</div>
<div class="a" style="left:613.3px;top:369.8px;width:0.8px;height:8px;background:#455364;"></div>
<svg class="a" style="left:614.9px;top:373px" width="3" height="2"><path d="M0.3 0.4L1.5 1.6L2.7 0.4" stroke="#9DA9B5" stroke-width="0.6" fill="none"/></svg>
<div class="a" style="left:623.2px;top:371.2px;width:4.8px;height:5.2px;background:transparent;border:0.8px solid #9DA9B5;border-radius:1px;"></div>
<div class="t" style="left:630.4px;top:371.90px;font-size:6.6px;font-weight:bold;letter-spacing:0px;transform:scaleX(0.745);">Dark Outer</div>
<div class="t" style="left:442px;top:48.90px;font-size:6.6px;font-weight:bold;letter-spacing:0px;transform:scaleX(0.745);">Color Core</div>
<div class="a" style="left:496px;top:42px;width:34.4px;height:339.5px;border:1.5px solid #22d6e0;border-radius:2.5px"></div>
<div class="t" style="left:498.5px;top:48.70px;font-size:6.6px;font-weight:bold;letter-spacing:0px;transform:scaleX(0.745);">Mesh Core</div>
<div class="a" style="left:451.1px;top:69.10000000000001px;width:10.699999999999989px;height:1.3px;background:#0d1116;"></div>
<div class="a" style="left:451.1px;top:70.4px;width:10.699999999999989px;height:13.199999999999989px;background:#e6e3e0;"></div>
<div class="a" style="left:451.1px;top:83.6px;width:10.699999999999989px;height:13.409999999999997px;background:#e6e3e0;"></div>
<div class="a" style="left:451.1px;top:97.00999999999999px;width:10.699999999999989px;height:13.409999999999997px;background:#e5e2df;"></div>
<div class="a" style="left:451.1px;top:110.41999999999999px;width:10.699999999999989px;height:13.41000000000001px;background:#e3e0dd;"></div>
<div class="a" style="left:451.1px;top:123.83px;width:10.699999999999989px;height:13.41000000000001px;background:#e1dedb;"></div>
<div class="a" style="left:451.1px;top:137.24px;width:10.699999999999989px;height:13.409999999999968px;background:#dedbd8;"></div>
<div class="a" style="left:451.1px;top:150.64999999999998px;width:10.699999999999989px;height:13.410000000000025px;background:#d8d6d4;"></div>
<div class="a" style="left:451.1px;top:164.06px;width:10.699999999999989px;height:13.409999999999997px;background:#d0d0d1;"></div>
<div class="a" style="left:451.1px;top:177.47px;width:10.699999999999989px;height:13.409999999999997px;background:#c8c9cb;"></div>
<div class="a" style="left:451.1px;top:190.88px;width:10.699999999999989px;height:13.409999999999997px;background:#b4b7bc;"></div>
<div class="a" style="left:451.1px;top:204.29px;width:10.699999999999989px;height:13.409999999999997px;background:#a2a6ac;"></div>
<div class="a" style="left:451.1px;top:217.7px;width:10.699999999999989px;height:13.409999999999997px;background:#9fa3a9;"></div>
<div class="a" style="left:451.1px;top:231.10999999999999px;width:10.699999999999989px;height:13.410000000000025px;background:#9da1a7;"></div>
<div class="a" style="left:451.1px;top:244.52px;width:10.699999999999989px;height:13.409999999999997px;background:#9b9fa5;"></div>
<div class="a" style="left:451.1px;top:257.93px;width:10.699999999999989px;height:13.410000000000025px;background:#999da3;"></div>
<div class="a" style="left:451.1px;top:271.34000000000003px;width:10.699999999999989px;height:13.409999999999968px;background:#999da3;"></div>
<div class="a" style="left:451.1px;top:284.75px;width:10.699999999999989px;height:13.409999999999968px;background:#56697b;"></div>
<div class="a" style="left:451.1px;top:298.15999999999997px;width:10.699999999999989px;height:13.410000000000025px;background:#4f6070;"></div>
<div class="a" style="left:451.1px;top:311.57px;width:10.699999999999989px;height:13.410000000000025px;background:#4a5a69;"></div>
<div class="a" style="left:451.1px;top:324.98px;width:10.699999999999989px;height:13.319999999999993px;background:#3f4b57;"></div>
<div class="a" style="left:451.1px;top:83.1px;width:10.699999999999989px;height:1.1px;background:#141a20;"></div>
<div class="a" style="left:451.1px;top:96.50999999999999px;width:10.699999999999989px;height:1.1px;background:#141a20;"></div>
<div class="a" style="left:451.1px;top:109.91999999999999px;width:10.699999999999989px;height:1.1px;background:#141a20;"></div>
<div class="a" style="left:451.1px;top:123.33px;width:10.699999999999989px;height:1.1px;background:#141a20;"></div>
<div class="a" style="left:451.1px;top:136.74px;width:10.699999999999989px;height:1.1px;background:#141a20;"></div>
<div class="a" style="left:451.1px;top:150.14999999999998px;width:10.699999999999989px;height:1.1px;background:#141a20;"></div>
<div class="a" style="left:451.1px;top:163.56px;width:10.699999999999989px;height:1.1px;background:#141a20;"></div>
<div class="a" style="left:451.1px;top:176.97px;width:10.699999999999989px;height:1.1px;background:#141a20;"></div>
<div class="a" style="left:451.1px;top:190.38px;width:10.699999999999989px;height:1.1px;background:#141a20;"></div>
<div class="a" style="left:451.1px;top:203.79px;width:10.699999999999989px;height:1.1px;background:#141a20;"></div>
<div class="a" style="left:451.1px;top:217.2px;width:10.699999999999989px;height:1.1px;background:#141a20;"></div>
<div class="a" style="left:451.1px;top:230.60999999999999px;width:10.699999999999989px;height:1.1px;background:#141a20;"></div>
<div class="a" style="left:451.1px;top:244.02px;width:10.699999999999989px;height:1.1px;background:#141a20;"></div>
<div class="a" style="left:451.1px;top:257.43px;width:10.699999999999989px;height:1.1px;background:#141a20;"></div>
<div class="a" style="left:451.1px;top:270.84000000000003px;width:10.699999999999989px;height:1.1px;background:#141a20;"></div>
<div class="a" style="left:451.1px;top:284.25px;width:10.699999999999989px;height:1.1px;background:#141a20;"></div>
<div class="a" style="left:451.1px;top:297.65999999999997px;width:10.699999999999989px;height:1.1px;background:#141a20;"></div>
<div class="a" style="left:451.1px;top:311.07px;width:10.699999999999989px;height:1.1px;background:#141a20;"></div>
<div class="a" style="left:451.1px;top:324.48px;width:10.699999999999989px;height:1.1px;background:#141a20;"></div>
<div class="a" style="left:451.1px;top:338.3px;width:10.699999999999989px;height:40.19999999999999px;background:#000;"></div>
<div class="a" style="left:454.1px;top:80.39999999999999px;width:4.4px;height:6.4px;background:#f2f2f2;border-radius:1.5px;opacity:.85"></div>
<div class="a" style="left:453.7px;top:83.1px;width:5.2px;height:1px;background:#111;"></div>
<div class="a" style="left:454.8px;top:80.8px;width:0.8px;height:5.6px;background:#222;"></div>
<div class="a" style="left:457.0px;top:80.8px;width:0.8px;height:5.6px;background:#222;"></div>
<div class="a" style="left:454.1px;top:93.80999999999999px;width:4.4px;height:6.4px;background:#f2f2f2;border-radius:1.5px;opacity:.85"></div>
<div class="a" style="left:453.7px;top:96.50999999999999px;width:5.2px;height:1px;background:#111;"></div>
<div class="a" style="left:454.8px;top:94.21px;width:0.8px;height:5.6px;background:#222;"></div>
<div class="a" style="left:457.0px;top:94.21px;width:0.8px;height:5.6px;background:#222;"></div>
<div class="a" style="left:454.1px;top:214.5px;width:4.4px;height:6.4px;background:#f2f2f2;border-radius:1.5px;opacity:.85"></div>
<div class="a" style="left:453.7px;top:217.2px;width:5.2px;height:1px;background:#111;"></div>
<div class="a" style="left:454.8px;top:214.89999999999998px;width:0.8px;height:5.6px;background:#222;"></div>
<div class="a" style="left:457.0px;top:214.89999999999998px;width:0.8px;height:5.6px;background:#222;"></div>
<div class="a" style="left:454.1px;top:227.91px;width:4.4px;height:6.4px;background:#f2f2f2;border-radius:1.5px;opacity:.85"></div>
<div class="a" style="left:453.7px;top:230.60999999999999px;width:5.2px;height:1px;background:#111;"></div>
<div class="a" style="left:454.8px;top:228.30999999999997px;width:0.8px;height:5.6px;background:#222;"></div>
<div class="a" style="left:457.0px;top:228.30999999999997px;width:0.8px;height:5.6px;background:#222;"></div>
<div class="a" style="left:454.1px;top:241.32000000000002px;width:4.4px;height:6.4px;background:#f2f2f2;border-radius:1.5px;opacity:.85"></div>
<div class="a" style="left:453.7px;top:244.02px;width:5.2px;height:1px;background:#111;"></div>
<div class="a" style="left:454.8px;top:241.72px;width:0.8px;height:5.6px;background:#222;"></div>
<div class="a" style="left:457.0px;top:241.72px;width:0.8px;height:5.6px;background:#222;"></div>
<div class="a" style="left:454.1px;top:254.73000000000002px;width:4.4px;height:6.4px;background:#f2f2f2;border-radius:1.5px;opacity:.85"></div>
<div class="a" style="left:453.7px;top:257.43px;width:5.2px;height:1px;background:#111;"></div>
<div class="a" style="left:454.8px;top:255.13px;width:0.8px;height:5.6px;background:#222;"></div>
<div class="a" style="left:457.0px;top:255.13px;width:0.8px;height:5.6px;background:#222;"></div>
<div class="a" style="left:450.4px;top:363.7px;width:11.5px;height:14.6px;background:transparent;border:1px solid #e8e8e8;border-radius:1.5px;"></div>
<div class="a" style="left:454.5px;top:349.1px;width:3.5px;height:0.8px;background:#bbb;"></div>
<div class="a" style="left:454.5px;top:353.6px;width:3.5px;height:0.8px;background:#bbb;"></div>
<div class="a" style="left:454.5px;top:361.6px;width:3.5px;height:0.8px;background:#bbb;"></div>
<div class="a" style="left:454.5px;top:367.1px;width:3.5px;height:0.8px;background:#bbb;"></div>
<div class="a" style="left:454.5px;top:375.0px;width:3.5px;height:0.8px;background:#bbb;"></div>
<div class="a" style="left:506.7px;top:69.10000000000001px;width:11.500000000000057px;height:1.3px;background:#0d1116;"></div>
<div class="a" style="left:506.7px;top:70.4px;width:11.500000000000057px;height:13.099999999999994px;background:#e4e1de;"></div>
<div class="a" style="left:506.7px;top:83.5px;width:11.500000000000057px;height:13.39px;background:#e4e1de;"></div>
<div class="a" style="left:506.7px;top:96.89px;width:11.500000000000057px;height:13.39px;background:#e4e1de;"></div>
<div class="a" style="left:506.7px;top:110.28px;width:11.500000000000057px;height:13.39px;background:#e4e1de;"></div>
<div class="a" style="left:506.7px;top:123.67px;width:11.500000000000057px;height:13.39px;background:#e4e1de;"></div>
<div class="a" style="left:506.7px;top:137.06px;width:11.500000000000057px;height:13.389999999999986px;background:#e4e1de;"></div>
<div class="a" style="left:506.7px;top:150.45px;width:11.500000000000057px;height:13.390000000000015px;background:#e4e1de;"></div>
<div class="a" style="left:506.7px;top:163.84px;width:11.500000000000057px;height:13.390000000000015px;background:#e4e1de;"></div>
<div class="a" style="left:506.7px;top:177.23000000000002px;width:11.500000000000057px;height:13.389999999999986px;background:#e4e1de;"></div>
<div class="a" style="left:506.7px;top:190.62px;width:11.500000000000057px;height:13.389999999999986px;background:#dedcda;"></div>
<div class="a" style="left:506.7px;top:204.01px;width:11.500000000000057px;height:13.390000000000015px;background:#cbd5de;"></div>
<div class="a" style="left:506.7px;top:217.4px;width:11.500000000000057px;height:13.390000000000015px;background:#c4d2df;"></div>
<div class="a" style="left:506.7px;top:230.79000000000002px;width:11.500000000000057px;height:13.389999999999986px;background:#b8cde0;"></div>
<div class="a" style="left:506.7px;top:244.18px;width:11.500000000000057px;height:13.389999999999986px;background:#a9c6e2;"></div>
<div class="a" style="left:506.7px;top:257.57px;width:11.500000000000057px;height:13.390000000000043px;background:#6aa6dc;"></div>
<div class="a" style="left:506.7px;top:270.96000000000004px;width:11.500000000000057px;height:13.389999999999986px;background:#5da6c6;"></div>
<div class="a" style="left:506.7px;top:284.35px;width:11.500000000000057px;height:13.389999999999986px;background:#66b4b4;"></div>
<div class="a" style="left:506.7px;top:297.74px;width:11.500000000000057px;height:13.389999999999986px;background:#55ab80;"></div>
<div class="a" style="left:506.7px;top:311.13px;width:11.500000000000057px;height:13.389999999999986px;background:#3c9f32;"></div>
<div class="a" style="left:506.7px;top:324.52px;width:11.500000000000057px;height:13.390000000000043px;background:#369f30;"></div>
<div class="a" style="left:506.7px;top:337.91px;width:11.500000000000057px;height:13.389999999999986px;background:#b05a1e;"></div>
<div class="a" style="left:506.7px;top:351.3px;width:11.500000000000057px;height:13.389999999999986px;background:#9e5424;"></div>
<div class="a" style="left:506.7px;top:83.0px;width:11.500000000000057px;height:1.1px;background:#141a20;"></div>
<div class="a" style="left:506.7px;top:96.39px;width:11.500000000000057px;height:1.1px;background:#141a20;"></div>
<div class="a" style="left:506.7px;top:109.78px;width:11.500000000000057px;height:1.1px;background:#141a20;"></div>
<div class="a" style="left:506.7px;top:123.17px;width:11.500000000000057px;height:1.1px;background:#141a20;"></div>
<div class="a" style="left:506.7px;top:136.56px;width:11.500000000000057px;height:1.1px;background:#141a20;"></div>
<div class="a" style="left:506.7px;top:149.95px;width:11.500000000000057px;height:1.1px;background:#141a20;"></div>
<div class="a" style="left:506.7px;top:163.34px;width:11.500000000000057px;height:1.1px;background:#141a20;"></div>
<div class="a" style="left:506.7px;top:176.73000000000002px;width:11.500000000000057px;height:1.1px;background:#141a20;"></div>
<div class="a" style="left:506.7px;top:190.12px;width:11.500000000000057px;height:1.1px;background:#141a20;"></div>
<div class="a" style="left:506.7px;top:203.51px;width:11.500000000000057px;height:1.1px;background:#141a20;"></div>
<div class="a" style="left:506.7px;top:216.9px;width:11.500000000000057px;height:1.1px;background:#141a20;"></div>
<div class="a" style="left:506.7px;top:230.29000000000002px;width:11.500000000000057px;height:1.1px;background:#141a20;"></div>
<div class="a" style="left:506.7px;top:243.68px;width:11.500000000000057px;height:1.1px;background:#141a20;"></div>
<div class="a" style="left:506.7px;top:257.07px;width:11.500000000000057px;height:1.1px;background:#141a20;"></div>
<div class="a" style="left:506.7px;top:270.46000000000004px;width:11.500000000000057px;height:1.1px;background:#141a20;"></div>
<div class="a" style="left:506.7px;top:283.85px;width:11.500000000000057px;height:1.1px;background:#141a20;"></div>
<div class="a" style="left:506.7px;top:297.24px;width:11.500000000000057px;height:1.1px;background:#141a20;"></div>
<div class="a" style="left:506.7px;top:310.63px;width:11.500000000000057px;height:1.1px;background:#141a20;"></div>
<div class="a" style="left:506.7px;top:324.02px;width:11.500000000000057px;height:1.1px;background:#141a20;"></div>
<div class="a" style="left:506.7px;top:337.41px;width:11.500000000000057px;height:1.1px;background:#141a20;"></div>
<div class="a" style="left:506.7px;top:350.8px;width:11.500000000000057px;height:1.1px;background:#141a20;"></div>
<div class="a" style="left:506.7px;top:364.69px;width:11.500000000000057px;height:13.509999999999991px;background:#000;"></div>
<div class="a" style="left:510.2px;top:80.3px;width:4.4px;height:6.4px;background:#f2f2f2;border-radius:1.5px;opacity:.85"></div>
<div class="a" style="left:509.79999999999995px;top:83.0px;width:5.2px;height:1px;background:#111;"></div>
<div class="a" style="left:510.9px;top:80.7px;width:0.8px;height:5.6px;background:#222;"></div>
<div class="a" style="left:513.1px;top:80.7px;width:0.8px;height:5.6px;background:#222;"></div>
<div class="a" style="left:510.2px;top:93.69px;width:4.4px;height:6.4px;background:#f2f2f2;border-radius:1.5px;opacity:.85"></div>
<div class="a" style="left:509.79999999999995px;top:96.39px;width:5.2px;height:1px;background:#111;"></div>
<div class="a" style="left:510.9px;top:94.09px;width:0.8px;height:5.6px;background:#222;"></div>
<div class="a" style="left:513.1px;top:94.09px;width:0.8px;height:5.6px;background:#222;"></div>
<div class="a" style="left:510.2px;top:107.08px;width:4.4px;height:6.4px;background:#f2f2f2;border-radius:1.5px;opacity:.85"></div>
<div class="a" style="left:509.79999999999995px;top:109.78px;width:5.2px;height:1px;background:#111;"></div>
<div class="a" style="left:510.9px;top:107.48px;width:0.8px;height:5.6px;background:#222;"></div>
<div class="a" style="left:513.1px;top:107.48px;width:0.8px;height:5.6px;background:#222;"></div>
<div class="a" style="left:510.2px;top:120.47px;width:4.4px;height:6.4px;background:#f2f2f2;border-radius:1.5px;opacity:.85"></div>
<div class="a" style="left:509.79999999999995px;top:123.17px;width:5.2px;height:1px;background:#111;"></div>
<div class="a" style="left:510.9px;top:120.87px;width:0.8px;height:5.6px;background:#222;"></div>
<div class="a" style="left:513.1px;top:120.87px;width:0.8px;height:5.6px;background:#222;"></div>
<div class="a" style="left:510.2px;top:133.86px;width:4.4px;height:6.4px;background:#f2f2f2;border-radius:1.5px;opacity:.85"></div>
<div class="a" style="left:509.79999999999995px;top:136.56px;width:5.2px;height:1px;background:#111;"></div>
<div class="a" style="left:510.9px;top:134.26px;width:0.8px;height:5.6px;background:#222;"></div>
<div class="a" style="left:513.1px;top:134.26px;width:0.8px;height:5.6px;background:#222;"></div>
<div class="a" style="left:510.2px;top:147.25px;width:4.4px;height:6.4px;background:#f2f2f2;border-radius:1.5px;opacity:.85"></div>
<div class="a" style="left:509.79999999999995px;top:149.95px;width:5.2px;height:1px;background:#111;"></div>
<div class="a" style="left:510.9px;top:147.64999999999998px;width:0.8px;height:5.6px;background:#222;"></div>
<div class="a" style="left:513.1px;top:147.64999999999998px;width:0.8px;height:5.6px;background:#222;"></div>
<div class="a" style="left:510.2px;top:160.64000000000001px;width:4.4px;height:6.4px;background:#f2f2f2;border-radius:1.5px;opacity:.85"></div>
<div class="a" style="left:509.79999999999995px;top:163.34px;width:5.2px;height:1px;background:#111;"></div>
<div class="a" style="left:510.9px;top:161.04px;width:0.8px;height:5.6px;background:#222;"></div>
<div class="a" style="left:513.1px;top:161.04px;width:0.8px;height:5.6px;background:#222;"></div>
<div class="a" style="left:510.2px;top:174.03000000000003px;width:4.4px;height:6.4px;background:#f2f2f2;border-radius:1.5px;opacity:.85"></div>
<div class="a" style="left:509.79999999999995px;top:176.73000000000002px;width:5.2px;height:1px;background:#111;"></div>
<div class="a" style="left:510.9px;top:174.43px;width:0.8px;height:5.6px;background:#222;"></div>
<div class="a" style="left:513.1px;top:174.43px;width:0.8px;height:5.6px;background:#222;"></div>
<div class="a" style="left:510.2px;top:187.42000000000002px;width:4.4px;height:6.4px;background:#f2f2f2;border-radius:1.5px;opacity:.85"></div>
<div class="a" style="left:509.79999999999995px;top:190.12px;width:5.2px;height:1px;background:#111;"></div>
<div class="a" style="left:510.9px;top:187.82px;width:0.8px;height:5.6px;background:#222;"></div>
<div class="a" style="left:513.1px;top:187.82px;width:0.8px;height:5.6px;background:#222;"></div>
<div class="a" style="left:505.8px;top:366px;width:11.3px;height:11.8px;background:transparent;border:1px solid #e8e8e8;border-radius:1.5px;"></div>
<div class="a" style="left:510px;top:372px;width:3.5px;height:0.8px;background:#bbb;"></div>
<div class="a" style="left:510px;top:374px;width:3.5px;height:0.8px;background:#bbb;"></div>
<div class="a" style="left:450px;top:109.8px;width:5px;height:0.8px;background:#d8d8d0;"></div>
<svg class="a" style="left:442.8px;top:106.60000000000001px" width="8.199999999999989" height="7.199999999999989"><polygon points="0.5,0.5 5.199999999999989,0.5 7.899999999999989,3.5999999999999943 5.199999999999989,6.699999999999989 0.5,6.699999999999989" fill="#e6e3e0" stroke="#c4c4bc" stroke-width="0.6"/><text x="2.5999999999999943" y="5.199999999999994" font-family="Liberation Sans" font-size="4.2" text-anchor="middle" fill="#111">28</text></svg>
<div class="a" style="left:454.6px;top:106.0px;width:18.0px;height:8.400000000000006px;background:#2e2e2e;border:0.8px solid #bdbdb8;display:flex;align-items:center;justify-content:center;padding-top:0.4px;font-size:5.5px;font-weight:bold;letter-spacing:0.35px;color:#eef0f2;white-space:nowrap">2.08</div>
<div class="a" style="left:450px;top:203.79999999999998px;width:5px;height:0.8px;background:#d8d8d0;"></div>
<svg class="a" style="left:442.8px;top:200.6px" width="8.199999999999989" height="7.199999999999989"><polygon points="0.5,0.5 5.199999999999989,0.5 7.899999999999989,3.5999999999999943 5.199999999999989,6.699999999999989 0.5,6.699999999999989" fill="#9fa3a9" stroke="#c4c4bc" stroke-width="0.6"/><text x="2.5999999999999943" y="5.199999999999994" font-family="Liberation Sans" font-size="4.2" text-anchor="middle" fill="#111">18</text></svg>
<div class="a" style="left:454.6px;top:200.0px;width:18.0px;height:8.399999999999977px;background:#2e2e2e;border:0.8px solid #bdbdb8;display:flex;align-items:center;justify-content:center;padding-top:0.4px;font-size:5.5px;font-weight:bold;letter-spacing:0.35px;color:#eef0f2;white-space:nowrap">1.52</div>
<div class="a" style="left:450px;top:283.70000000000005px;width:5px;height:0.8px;background:#d8d8d0;"></div>
<svg class="a" style="left:442.8px;top:280.5px" width="8.199999999999989" height="7.2000000000000455"><polygon points="0.5,0.5 5.199999999999989,0.5 7.899999999999989,3.6000000000000227 5.199999999999989,6.7000000000000455 0.5,6.7000000000000455" fill="#56697b" stroke="#c4c4bc" stroke-width="0.6"/><text x="2.5999999999999943" y="5.200000000000022" font-family="Liberation Sans" font-size="4.2" text-anchor="middle" fill="#ddd">12</text></svg>
<div class="a" style="left:454.6px;top:279.90000000000003px;width:18.0px;height:8.399999999999977px;background:#2e2e2e;border:0.8px solid #bdbdb8;display:flex;align-items:center;justify-content:center;padding-top:0.4px;font-size:5.5px;font-weight:bold;letter-spacing:0.35px;color:#eef0f2;white-space:nowrap">1.04</div>
<div class="a" style="left:450px;top:337.90000000000003px;width:5px;height:0.8px;background:#d8d8d0;"></div>
<svg class="a" style="left:442.8px;top:334.7px" width="8.199999999999989" height="7.2000000000000455"><polygon points="0.5,0.5 5.199999999999989,0.5 7.899999999999989,3.6000000000000227 5.199999999999989,6.7000000000000455 0.5,6.7000000000000455" fill="#000" stroke="#c4c4bc" stroke-width="0.6"/><text x="2.5999999999999943" y="5.200000000000022" font-family="Liberation Sans" font-size="4.2" text-anchor="middle" fill="#eee">8</text></svg>
<div class="a" style="left:454.6px;top:334.1px;width:18.0px;height:8.399999999999977px;background:#2e2e2e;border:0.8px solid #bdbdb8;display:flex;align-items:center;justify-content:center;padding-top:0.4px;font-size:5.5px;font-weight:bold;letter-spacing:0.35px;color:#eef0f2;white-space:nowrap">0.72</div>
<div class="a" style="left:506px;top:190.5px;width:6px;height:0.8px;background:#d8d8d0;"></div>
<svg class="a" style="left:498.5px;top:187.20000000000002px" width="8.300000000000011" height="7.399999999999977"><polygon points="0.5,0.5 5.300000000000011,0.5 8.00000000000001,3.6999999999999886 5.300000000000011,6.899999999999977 0.5,6.899999999999977" fill="#e4e1de" stroke="#c4c4bc" stroke-width="0.6"/><text x="2.6500000000000057" y="5.299999999999988" font-family="Liberation Sans" font-size="4.2" text-anchor="middle" fill="#111">19</text></svg>
<div class="a" style="left:511.4px;top:186.9px;width:17.399999999999977px;height:8.0px;background:#2e2e2e;border:0.8px solid #bdbdb8;display:flex;align-items:center;justify-content:center;padding-top:0.4px;font-size:5.5px;font-weight:bold;letter-spacing:0.35px;color:#eef0f2;white-space:nowrap">1.6</div>
<div class="a" style="left:506px;top:257.3px;width:6px;height:0.8px;background:#d8d8d0;"></div>
<svg class="a" style="left:498.5px;top:254.0px" width="8.300000000000011" height="7.399999999999977"><polygon points="0.5,0.5 5.300000000000011,0.5 8.00000000000001,3.6999999999999886 5.300000000000011,6.899999999999977 0.5,6.899999999999977" fill="#6aa6dc" stroke="#c4c4bc" stroke-width="0.6"/><text x="2.6500000000000057" y="5.299999999999988" font-family="Liberation Sans" font-size="4.2" text-anchor="middle" fill="#111">14</text></svg>
<div class="a" style="left:511.4px;top:253.7px;width:17.399999999999977px;height:8.0px;background:#2e2e2e;border:0.8px solid #bdbdb8;display:flex;align-items:center;justify-content:center;padding-top:0.4px;font-size:5.5px;font-weight:bold;letter-spacing:0.35px;color:#eef0f2;white-space:nowrap">1.2</div>
<div class="a" style="left:506px;top:338.3px;width:6px;height:0.8px;background:#d8d8d0;"></div>
<svg class="a" style="left:498.5px;top:335.0px" width="8.300000000000011" height="7.399999999999977"><polygon points="0.5,0.5 5.300000000000011,0.5 8.00000000000001,3.6999999999999886 5.300000000000011,6.899999999999977 0.5,6.899999999999977" fill="#c0601e" stroke="#c4c4bc" stroke-width="0.6"/><text x="2.6500000000000057" y="5.299999999999988" font-family="Liberation Sans" font-size="4.2" text-anchor="middle" fill="#eee">8</text></svg>
<div class="a" style="left:511.4px;top:334.7px;width:17.399999999999977px;height:8.0px;background:#2e2e2e;border:0.8px solid #bdbdb8;display:flex;align-items:center;justify-content:center;padding-top:0.4px;font-size:5.5px;font-weight:bold;letter-spacing:0.35px;color:#eef0f2;white-space:nowrap">0.72</div>
<div class="a" style="left:506px;top:364.40000000000003px;width:6px;height:0.8px;background:#d8d8d0;"></div>
<svg class="a" style="left:498.5px;top:361.1px" width="8.300000000000011" height="7.399999999999977"><polygon points="0.5,0.5 5.300000000000011,0.5 8.00000000000001,3.6999999999999886 5.300000000000011,6.899999999999977 0.5,6.899999999999977" fill="#000" stroke="#c4c4bc" stroke-width="0.6"/><text x="2.6500000000000057" y="5.299999999999988" font-family="Liberation Sans" font-size="4.2" text-anchor="middle" fill="#eee">6</text></svg>
<div class="a" style="left:511.4px;top:360.8px;width:17.399999999999977px;height:8.0px;background:#2e2e2e;border:0.8px solid #bdbdb8;display:flex;align-items:center;justify-content:center;padding-top:0.4px;font-size:5.5px;font-weight:bold;letter-spacing:0.35px;color:#eef0f2;white-space:nowrap">0.56</div>
<div class="a" style="left:513px;top:311.2px;width:5px;height:0.8px;background:#d8d8d0;"></div>
<div class="a" style="left:496.6px;top:307.6px;width:17.600000000000023px;height:7.399999999999977px;background:#2e2e2e;border:0.8px solid #bdbdb8;display:flex;align-items:center;justify-content:center;padding-top:0.4px;font-size:5.5px;font-weight:bold;letter-spacing:0.35px;color:#eef0f2;white-space:nowrap">0.88</div>
<svg class="a" style="left:516.5px;top:307.2px" width="10.5" height="8"><polygon points="3,0.5 7.5,0.5 10,4 7.5,7.5 3,7.5 0.5,4" fill="#3caa3c" stroke="#d8d8d0" stroke-width="0.7"/><text x="5.3" y="5.5" font-family="Liberation Sans" font-size="4.2" text-anchor="middle" fill="#eee">10</text></svg>
<div class="a" style="left:476.2px;top:293.7px;width:12.400000000000034px;height:9.199999999999989px;background:#6b5fd8;border-radius:2px;display:flex;align-items:center;justify-content:center;font-size:6px;color:#E0E1E3"><svg width="6" height="4"><path d="M0.5 0v4M5.5 0L1 2l4.5 2z" stroke="#2a2a6a" fill="#2a2a6a" stroke-width="0.8"/></svg></div>
<div class="a" style="left:476.2px;top:305.3px;width:12.400000000000034px;height:9.0px;background:#6b5fd8;border-radius:2px;display:flex;align-items:center;justify-content:center;font-size:6px;color:#E0E1E3"><svg width="6" height="4"><path d="M5.5 0v4M0.5 0L5 2L0.5 4z" stroke="#2a2a6a" fill="#2a2a6a" stroke-width="0.8"/></svg></div>
<div class="a" style="left:476.2px;top:317.3px;width:12.400000000000034px;height:8.699999999999989px;background:#455364;border-radius:2px;display:flex;align-items:center;justify-content:center;font-size:6px;color:#E0E1E3"><svg width="6" height="6"><rect x="0.8" y="2.6" width="4" height="3" fill="#f0a020"/><path d="M2 2.6V1.5a1.4 1.4 0 0 1 2.8 0" stroke="#f0a020" fill="none" stroke-width="0.8"/></svg></div>
<div class="a" style="left:476.2px;top:329.2px;width:12.400000000000034px;height:8.400000000000034px;background:#6b5fd8;border-radius:2px;display:flex;align-items:center;justify-content:center;font-size:6px;color:#E0E1E3"><svg width="6" height="5"><path d="M1 2.5L5.5 0.5v4z" fill="none" stroke="#ddd" stroke-width="0.8"/></svg></div>
<div class="a" style="left:476.2px;top:340.8px;width:12.400000000000034px;height:8.699999999999989px;background:#6b5fd8;border-radius:2px;display:flex;align-items:center;justify-content:center;font-size:6px;color:#E0E1E3"><svg width="6" height="6"><circle cx="3" cy="3" r="2.7" fill="#f0305a"/><path d="M1.2 4.8L4.8 1.2" stroke="#fff" stroke-width="0.9"/></svg></div>
<div class="a" style="left:476.2px;top:352.5px;width:17.30000000000001px;height:8.899999999999977px;background:#455364;border-radius:2px;display:flex;align-items:center;justify-content:center;font-size:6px;color:#E0E1E3"><span style="font-size:6px;letter-spacing:-0.2px;text-decoration:underline">TD</span></div>
<div class="a" style="left:477.4px;top:363.9px;width:14.400000000000034px;height:9.200000000000045px;background:#1f7a5c;border-radius:2px;display:flex;align-items:center;justify-content:center;font-size:6px;color:#E0E1E3"><svg width="7" height="5"><path d="M0.8 0.8L6.2 4.2" stroke="#eee" stroke-width="1.5"/></svg></div>
<div class="a" style="left:476.2px;top:375.6px;width:14.800000000000011px;height:8.699999999999989px;background:#455364;border-radius:2px;display:flex;align-items:center;justify-content:center;font-size:6px;color:#E0E1E3"><svg width="4" height="5"><path d="M0.5 0.5L3.5 2.5L0.5 4.5z" fill="#111"/></svg></div>
<div class="a" style="left:689px;top:378px;width:64px;height:50px;background:#346792;border:0.6px solid #4a7aa0"></div>
<div class="t" style="left:690.8px;top:379.20px;font-size:7px;font-weight:normal;letter-spacing:0px;transform:scaleX(0.81);color:#e6e8ea;text-shadow:0 0 0.3px #e6e8ea;">Color: #19232d</div>
<div class="t" style="left:690.8px;top:387.10px;font-size:7px;font-weight:normal;letter-spacing:0px;transform:scaleX(0.81);color:#e6e8ea;text-shadow:0 0 0.3px #e6e8ea;">Hue: 0.583</div>
<div class="t" style="left:690.8px;top:395.00px;font-size:7px;font-weight:normal;letter-spacing:0px;transform:scaleX(0.81);color:#e6e8ea;text-shadow:0 0 0.3px #e6e8ea;">Saturation: 0.286</div>
<div class="t" style="left:690.8px;top:402.90px;font-size:7px;font-weight:normal;letter-spacing:0px;transform:scaleX(0.81);color:#e6e8ea;text-shadow:0 0 0.3px #e6e8ea;">Lightness: 0.137</div>
<div class="t" style="left:690.8px;top:410.80px;font-size:7px;font-weight:normal;letter-spacing:0px;transform:scaleX(0.81);color:#e6e8ea;text-shadow:0 0 0.3px #e6e8ea;">Shown Size 1024x1024</div>
<div class="t" style="left:690.8px;top:418.70px;font-size:7px;font-weight:normal;letter-spacing:0px;transform:scaleX(0.81);color:#e6e8ea;text-shadow:0 0 0.3px #e6e8ea;">&nbsp;&nbsp;&nbsp;&nbsp;&nbsp;&nbsp;&nbsp;&nbsp;&nbsp;Z: 0.48</div></body></html>
